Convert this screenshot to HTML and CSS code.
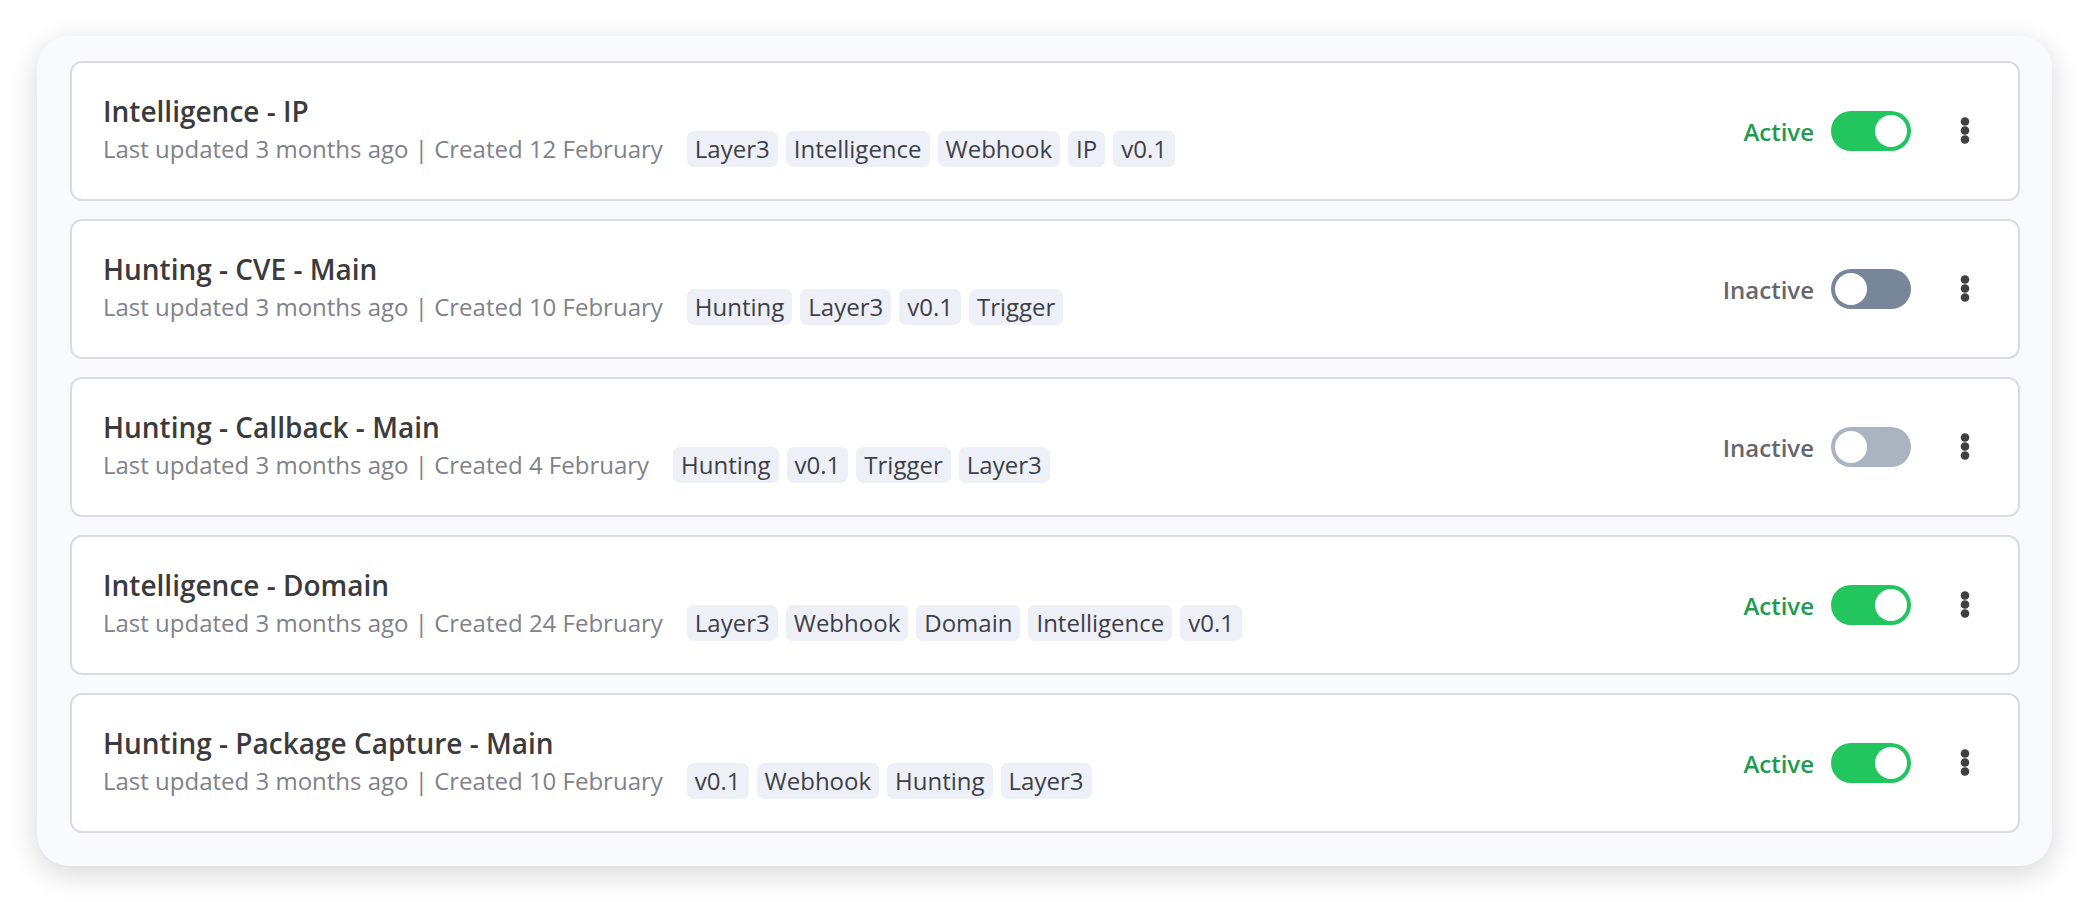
FILE: index.html
```html
<!DOCTYPE html>
<html lang="en">
<head>
<meta charset="utf-8">
<title>Workflows</title>
<link rel="stylesheet" href="styles.css">
</head>
<body>
<div class="panel">
  <div class="card">
    <div class="info">
      <div class="title">Intelligence - IP</div>
      <div class="meta">
        <span class="dates">Last updated 3 months ago | Created 12 February</span>
        <span class="tags"><span class="tag">Layer3</span><span class="tag">Intelligence</span><span class="tag">Webhook</span><span class="tag">IP</span><span class="tag">v0.1</span></span>
      </div>
    </div>
    <div class="actions">
      <span class="status status-on">Active</span>
      <span class="toggle toggle-on"><span class="knob"></span></span>
      <button class="kebab" aria-label="More"><svg width="10" height="28" viewBox="0 0 10 28"><circle cx="5" cy="4.5" r="4.3"/><circle cx="5" cy="13.5" r="4.3"/><circle cx="5" cy="22.5" r="4.3"/></svg></button>
    </div>
  </div>

  <div class="card">
    <div class="info">
      <div class="title">Hunting - CVE - Main</div>
      <div class="meta">
        <span class="dates">Last updated 3 months ago | Created 10 February</span>
        <span class="tags"><span class="tag">Hunting</span><span class="tag">Layer3</span><span class="tag">v0.1</span><span class="tag">Trigger</span></span>
      </div>
    </div>
    <div class="actions">
      <span class="status status-off">Inactive</span>
      <span class="toggle toggle-off"><span class="knob"></span></span>
      <button class="kebab" aria-label="More"><svg width="10" height="28" viewBox="0 0 10 28"><circle cx="5" cy="4.5" r="4.3"/><circle cx="5" cy="13.5" r="4.3"/><circle cx="5" cy="22.5" r="4.3"/></svg></button>
    </div>
  </div>

  <div class="card">
    <div class="info">
      <div class="title">Hunting - Callback - Main</div>
      <div class="meta">
        <span class="dates">Last updated 3 months ago | Created 4 February</span>
        <span class="tags"><span class="tag">Hunting</span><span class="tag">v0.1</span><span class="tag">Trigger</span><span class="tag">Layer3</span></span>
      </div>
    </div>
    <div class="actions">
      <span class="status status-off">Inactive</span>
      <span class="toggle toggle-off toggle-light"><span class="knob"></span></span>
      <button class="kebab" aria-label="More"><svg width="10" height="28" viewBox="0 0 10 28"><circle cx="5" cy="4.5" r="4.3"/><circle cx="5" cy="13.5" r="4.3"/><circle cx="5" cy="22.5" r="4.3"/></svg></button>
    </div>
  </div>

  <div class="card">
    <div class="info">
      <div class="title">Intelligence - Domain</div>
      <div class="meta">
        <span class="dates">Last updated 3 months ago | Created 24 February</span>
        <span class="tags"><span class="tag">Layer3</span><span class="tag">Webhook</span><span class="tag">Domain</span><span class="tag">Intelligence</span><span class="tag">v0.1</span></span>
      </div>
    </div>
    <div class="actions">
      <span class="status status-on">Active</span>
      <span class="toggle toggle-on"><span class="knob"></span></span>
      <button class="kebab" aria-label="More"><svg width="10" height="28" viewBox="0 0 10 28"><circle cx="5" cy="4.5" r="4.3"/><circle cx="5" cy="13.5" r="4.3"/><circle cx="5" cy="22.5" r="4.3"/></svg></button>
    </div>
  </div>

  <div class="card">
    <div class="info">
      <div class="title">Hunting - Package Capture - Main</div>
      <div class="meta">
        <span class="dates">Last updated 3 months ago | Created 10 February</span>
        <span class="tags"><span class="tag">v0.1</span><span class="tag">Webhook</span><span class="tag">Hunting</span><span class="tag">Layer3</span></span>
      </div>
    </div>
    <div class="actions">
      <span class="status status-on">Active</span>
      <span class="toggle toggle-on"><span class="knob"></span></span>
      <button class="kebab" aria-label="More"><svg width="10" height="28" viewBox="0 0 10 28"><circle cx="5" cy="4.5" r="4.3"/><circle cx="5" cy="13.5" r="4.3"/><circle cx="5" cy="22.5" r="4.3"/></svg></button>
    </div>
  </div>
</div>
</body>
</html>
```

FILE: styles.css
```css
* { box-sizing: border-box; }

html, body {
  margin: 0;
  background: #ffffff;
}

body {
  padding: 36px 36px 36px 37px;
  font-family: "Open Sans", "Noto Sans", sans-serif;
}

.panel {
  background: #f9fafd;
  border-radius: 32px;
  padding: 25px 32px 33px 33px;
  display: flex;
  flex-direction: column;
  gap: 18px;
  box-shadow: 0 8px 30px rgba(0, 0, 0, 0.16);
}

.card {
  height: 140px;
  background: #ffffff;
  border: 2px solid #d9dce7;
  border-radius: 12px;
  padding: 0 0 4px 31px;
  display: flex;
  align-items: center;
  justify-content: space-between;
}

.info {
  display: flex;
  flex-direction: column;
}

.title {
  font-size: 28px;
  font-weight: 600;
  line-height: 40px;
  color: #3b3b3d;
}

.meta {
  display: flex;
  align-items: center;
}

.dates {
  font-size: 24px;
  line-height: 36px;
  color: #7f8289;
  margin-right: 24px;
  white-space: nowrap;
}

.tags {
  display: flex;
  gap: 8px;
}

.tag {
  background: #eef0f7;
  border-radius: 7px;
  height: 36px;
  padding: 0 8px;
  font-size: 24px;
  line-height: 35px;
  color: #3e4047;
  white-space: nowrap;
}

.actions {
  display: flex;
  align-items: center;
  padding-right: 35px;
  margin-top: 4px;
}

.status {
  font-size: 24px;
  font-weight: 600;
  margin-right: 17px;
}

.status-on { color: #1f9b50; }
.status-off { color: #66666e; }

.toggle {
  width: 80px;
  height: 40px;
  border-radius: 20px;
  padding: 4px;
  display: flex;
}

.toggle-on {
  background: #22c55e;
  justify-content: flex-end;
}

.toggle-off {
  background: #778699;
  justify-content: flex-start;
}

.toggle-light {
  background: #a9b4c0;
}

.knob {
  width: 32px;
  height: 32px;
  border-radius: 50%;
  background: #ffffff;
}

.kebab {
  width: 36px;
  height: 40px;
  margin-left: 36px;
  padding: 0;
  border: 0;
  background: transparent;
  display: flex;
  align-items: center;
  justify-content: center;
}

.kebab svg {
  fill: #404040;
  display: block;
}
```
